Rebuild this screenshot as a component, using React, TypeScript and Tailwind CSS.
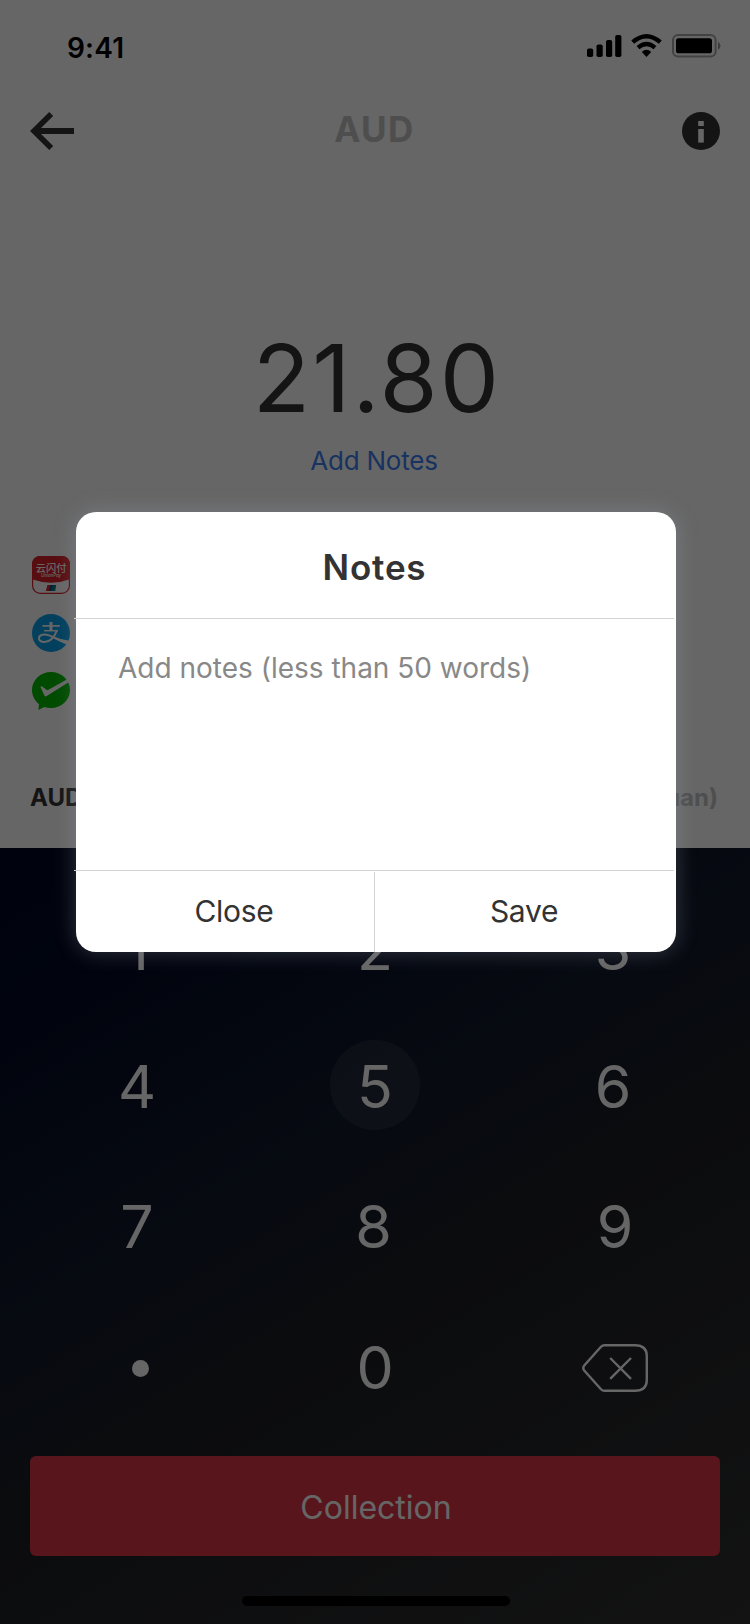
import type { ReactNode } from "react";

function StatusIcons() {
  return (
    <svg width="136" height="26" viewBox="586 32 136 26" className="-mt-[4px]">
      <rect x="587" y="48.5" width="6.2" height="8.5" rx="1.8" />
      <rect x="596.5" y="44.5" width="6.2" height="12.5" rx="1.8" />
      <rect x="606" y="40" width="6.2" height="17" rx="1.8" />
      <rect x="615.2" y="35" width="6.2" height="22" rx="1.8" />
      <path d="M646.5 57 L641.8 52 Q646.5 47.6 651.2 52 Z" />
      <path d="M638 47.7 Q646.5 40.3 655 47.7" fill="none" stroke="#000" strokeWidth="4.2" />
      <path d="M632.7 42.2 Q646.5 30.4 660.3 42.2" fill="none" stroke="#000" strokeWidth="4.4" />
      <rect x="673" y="35" width="42.6" height="21.4" rx="5" fill="none" stroke="#000" strokeOpacity=".35" strokeWidth="2" />
      <rect x="676" y="38.3" width="36" height="15" rx="2.6" />
      <path d="M718 41.7 a4.6 4.6 0 0 1 0 8.2 z" fillOpacity=".4" />
    </svg>
  );
}

function BackArrow() {
  return (
    <svg width="44" height="38" viewBox="0 0 44 38" fill="none" stroke="#333" strokeWidth="5.6">
      <path d="M21.2 2 L4 19 L21.2 36" />
      <path d="M4 19 H44" strokeWidth="6" />
    </svg>
  );
}

function InfoIcon() {
  return (
    <svg width="38" height="38" viewBox="0 0 38 38">
      <circle cx="19" cy="19" r="19" fill="#333" />
      <rect x="16.2" y="9" width="5.6" height="5" fill="#fff" />
      <rect x="16.2" y="17" width="5.6" height="13.6" fill="#fff" />
    </svg>
  );
}

function UnionPayIcon() {
  return (
    <svg width="38" height="38" viewBox="0 0 38 38">
      <rect x=".6" y=".6" width="36.8" height="36.8" rx="7.6" fill="#fff" stroke="#dc232b" strokeWidth="1.2" />
      <path d="M0 23.2 V8 A8 8 0 0 1 8 0 H30 A8 8 0 0 1 38 8 V23.2 Q19 30.2 0 23.2 Z" fill="#dc232b" />
      <text x="3.8" y="15.6" textLength="30.6" lengthAdjust="spacingAndGlyphs" fill="#fff" fontSize="10.2" fontWeight="500" className="font-['Noto_Sans_CJK_SC',sans-serif]">云闪付</text>
      <text x="9" y="21.4" textLength="20" lengthAdjust="spacingAndGlyphs" fill="#fff" fontSize="4.2" fontStyle="italic" fontWeight="500" className="font-['Inter',sans-serif]">UnionPay</text>
      <path d="M15.4 29 h4 l-1.6 6 h-4 z" fill="#e0242b" />
      <path d="M18.4 29 h3.4 l-1.6 6 h-3.4 z" fill="#0a4a8c" />
      <path d="M20.8 29 h3.4 l-1 6 h-4 z" fill="#007b84" />
    </svg>
  );
}

function AlipayIcon() {
  return (
    <svg width="38" height="38" viewBox="0 0 38 38">
      <circle cx="19" cy="19" r="19" fill="#06a0e9" />
      <g fill="none" stroke="#fff">
        <path d="M10.4 11.9 H27.8" strokeWidth="1.7" />
        <path d="M19 8 V16.6" strokeWidth="3" />
        <path d="M12 16.7 H25.8" strokeWidth="1.5" />
        <path d="M25 16.4 C22.8 22 18.6 28 12.4 28 C8.6 28 6.6 26 7 23.6 C7.6 20.4 12.6 19.8 17 21.4 C22 23.2 27 26 36 29" strokeWidth="2" />
      </g>
      <path d="M21.5 23.2 Q28 25.3 36.6 26.4 L34.4 30.4 Q27 27.6 21.5 24.6 Z" fill="#fff" />
    </svg>
  );
}

function WechatPayIcon() {
  return (
    <svg width="38" height="38" viewBox="0 0 38 38">
      <path d="M19 0 C29.5 0 38 8 38 18 C38 28 29.5 36 19 36 Q15.4 36 12.2 35 L6.4 38 L7 32 C2.6 28.6 0 23.6 0 18 C0 8 8.5 0 19 0 Z" fill="#00bb00" />
      <path d="M8.6 15.2 Q8.6 13.6 10.2 14.6 L14.4 17.7 Q15.2 18.2 16.4 17.7 L34.8 7.5 L36.6 10.2 L14.8 24.1 Q13.2 25 12.4 23.6 Z" fill="#fff" />
    </svg>
  );
}

function DeleteIcon() {
  return (
    <svg width="66" height="48" viewBox="0 0 66 48" fill="none" stroke="#fff" strokeWidth="2.4" strokeLinejoin="round">
      <path d="M22.5 1.2 H53 Q64.8 1.2 64.8 12 V36 Q64.8 46.8 53 46.8 H22.5 Q20.5 46.8 19 45.2 L2 26.2 Q.6 24 2 21.8 L19 2.8 Q20.5 1.2 22.5 1.2 Z" />
      <path d="M28.2 14 L49 34.8 M49 14 L28.2 34.8" />
    </svg>
  );
}

const keys: { id: string; face: ReactNode; nudge: string }[] = [
  { id: "1", face: "1", nudge: "" },
  { id: "2", face: "2", nudge: "" },
  { id: "3", face: "3", nudge: "" },
  { id: "4", face: "4", nudge: "" },
  { id: "5", face: "5", nudge: "" },
  { id: "6", face: "6", nudge: "" },
  { id: "7", face: "7", nudge: "" },
  { id: "8", face: "8", nudge: "pr-[3px]" },
  { id: "9", face: "9", nudge: "pl-[4px]" },
  { id: "dot", face: <span className="size-[17px] rounded-full bg-white" />, nudge: "pl-[7px] pt-[3px]" },
  { id: "0", face: "0", nudge: "" },
  { id: "delete", face: <DeleteIcon />, nudge: "pl-[4px] pt-[2px]" },
];

function Keypad() {
  return (
    <div className="grid grid-cols-3 grid-rows-[138px_139px_141px_140px] px-[18px] pt-[31px] text-[59px] leading-none text-white">
      {keys.map((key) => (
        <button key={key.id} className={`relative flex items-center justify-center ${key.nudge}`}>
          {key.id === "5" && (
            <span className="absolute left-1/2 top-1/2 -ml-[45px] -mt-[47px] size-[90px] rounded-full bg-white/[0.07]" />
          )}
          {key.face}
        </button>
      ))}
    </div>
  );
}

function NotesDialog() {
  return (
    <div className="relative flex h-[440px] w-[600px] flex-col rounded-[20px] bg-white text-[#333] shadow-[0_0_22px_rgba(174,183,206,0.28)]">
      <h2 className="flex h-[106px] items-center justify-center pr-[3px] pt-[5px] text-[35px] font-semibold tracking-[0.8px]">Notes</h2>
      <div className="-ml-[2px] h-px w-[600px] bg-[#d4d4d4]" />
      <div className="h-[251px] px-[42px] pt-[29px] text-[28px] leading-[40px] text-[#888]">
        Add notes (less than 50 words)
      </div>
      <div className="-ml-[2px] h-px w-[600px] bg-[#d4d4d4]" />
      <div className="flex flex-1 pt-px text-[30px] tracking-[-0.3px]">
        <button className="flex w-[298px] items-center justify-center pb-[2px] pl-[18px]">Close</button>
        <span className="w-px bg-[#d4d4d4]" />
        <button className="flex flex-1 items-center justify-center pb-[2px] pr-[3px]">Save</button>
      </div>
    </div>
  );
}

export default function App() {
  return (
    <div className="relative h-[1624px] w-[750px] overflow-hidden bg-white font-['Inter','Liberation_Sans',sans-serif]">
      <section className="flex h-[848px] flex-col">
        <div className="flex h-[94px] items-center justify-between pl-[67px] pr-[28px] text-black">
          <span className="pt-px text-[28px] font-semibold tracking-[0.2px]">9:41</span>
          <StatusIcons />
        </div>
        <header className="flex h-[74px] items-center justify-between px-[30px]">
          <BackArrow />
          <h1 className="-mt-[3px] pr-[7px] text-[35px] font-bold tracking-[1.4px] text-[#c4c4c4]">AUD</h1>
          <InfoIcon />
        </header>
        <div className="mt-[150px] flex h-[120px] items-center justify-center pl-[4px] text-[94px] leading-none tracking-[2.1px] text-[#333]">21.80</div>
        <div className="flex h-[46px] items-center justify-center pb-[2px] pr-[2px] text-[26px] tracking-[-0.2px] text-[#4080f0]">Add Notes</div>
        <div className="mt-[72px] flex flex-col gap-5 pl-[32px]">
          <UnionPayIcon />
          <AlipayIcon />
          <WechatPayIcon />
        </div>
        <div className="mt-[68px] flex h-[39px] items-center justify-between pl-[30px] pr-[32px] text-[24px] font-bold">
          <span className="text-[#333]">AUD</span>
          <span className="text-[#c4c4c4]">(Yuan)</span>
        </div>
      </section>
      <section className="h-[776px] bg-[linear-gradient(149deg,#000824_0%,#030b24_15%,#121a2c_40%,#161c29_48%,#1c1e24_54%,#303030_100%)]">
        <Keypad />
        <button className="mx-[30px] mt-[19px] flex h-[100px] w-[690px] items-center justify-center rounded-[6px] bg-[#dc3545] pl-[2px] pt-[3px] text-[32px] text-white">
          Collection
        </button>
        <div className="ml-[242px] mt-10 h-[10px] w-[268px] rounded-full bg-black" />
      </section>
      <div className="absolute inset-0 bg-black/60 pl-[76px] pt-[512px]">
        <NotesDialog />
      </div>
    </div>
  );
}
